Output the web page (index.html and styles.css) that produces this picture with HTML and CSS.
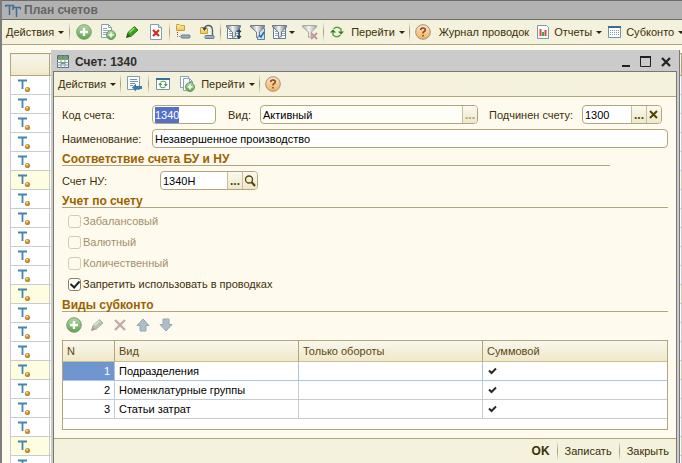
FILE: index.html
```html
<!DOCTYPE html>
<html lang="ru">
<head>
<meta charset="utf-8">
<title>План счетов</title>
<link rel="stylesheet" href="styles.css">
</head>
<body>
<svg class="defs" aria-hidden="true">
  <defs>
    <linearGradient id="green" x1="0" y1="0" x2="0" y2="1"><stop offset="0" stop-color="#b4d8a6"/><stop offset="1" stop-color="#5aa548"/></linearGradient>
    <linearGradient id="orange" x1="0" y1="0" x2="0" y2="1"><stop offset="0" stop-color="#fbe3c8"/><stop offset="1" stop-color="#f4b25c"/></linearGradient>
    <linearGradient id="steel" x1="0" y1="0" x2="1" y2="0"><stop offset="0" stop-color="#7b838c"/><stop offset=".45" stop-color="#f4f6f8"/><stop offset="1" stop-color="#6a727c"/></linearGradient>
    <linearGradient id="folder" x1="0" y1="0" x2="0" y2="1"><stop offset="0" stop-color="#fff0b4"/><stop offset="1" stop-color="#ecc34c"/></linearGradient>
    <symbol id="i-add" viewBox="0 0 16 16"><circle cx="8" cy="8" r="7.3" fill="url(#green)" stroke="#7d9c78"/><path d="M8 4v8M4 8h8" stroke="#fff" stroke-width="2.4"/></symbol>
    <symbol id="i-copy" viewBox="0 0 16 16"><path d="M1.5.5h7l3 3v10h-10z" fill="#fff" stroke="#8aa0b2"/><path d="M8.500.5v3h3M3 4.500h4M3 6.500h6M3 8.500h5M3 10.500h4" fill="none" stroke="#8fa6b8"/><circle cx="11" cy="11" r="4.500" fill="url(#green)" stroke="#679b5c"/><path d="M11 8.500v5M8.500 11h5" stroke="#fff" stroke-width="1.500"/></symbol>
    <symbol id="i-docs" viewBox="0 0 16 16"><path d="M1.500.5h8v11h-8z" fill="#fff" stroke="#8aa0b2"/><path d="M4.500 2.500h6l3 3v9h-9z" fill="#f8fbfd" stroke="#8aa0b2"/><path d="M10.500 2.500v3h3" fill="none" stroke="#8aa0b2"/><circle cx="11" cy="11" r="4.500" fill="url(#green)" stroke="#679b5c"/><path d="M11 8.500v5M8.500 11h5" stroke="#fff" stroke-width="1.500"/></symbol>
    <symbol id="i-pencil" viewBox="0 0 16 16"><path d="M2.500 13.500l1.500-5 6.500-6 3.500 3.500-6.500 6z" fill="#39a51d" stroke="#2c7d1b"/><path d="M5.500 8.500l5-4.500" stroke="#8be56a" stroke-width="1.500"/><path d="M3.500 9.500l3 3-4 1z" fill="#4a4a36"/></symbol>
    <symbol id="i-del" viewBox="0 0 16 16"><path d="M2.500.5h8l3 3v12h-11z" fill="#fff" stroke="#849caf"/><path d="M10.500.5v3h3" fill="#dce6ee" stroke="#849caf"/><path d="M5 6l6 6M11 6l-6 6" stroke="#d32c20" stroke-width="2.200"/></symbol>
    <symbol id="i-level" viewBox="0 0 16 16"><path d="M1.500 1.500v-1h3l1 1h4v5h-8z" fill="url(#folder)" stroke="#c6a041"/><path d="M2.500 8v4.500h2" fill="none" stroke="#4d4d35" stroke-dasharray="1 1"/><rect x="6" y="11" width="9" height="3" rx="1" fill="#9bb0c4" stroke="#60788e"/></symbol>
    <symbol id="i-move" viewBox="0 0 16 16"><path d="M1.500 4.500v-1h3l1 1h3v5h-7z" fill="url(#folder)" stroke="#c6a041"/><path d="M13.500 11V6Q13 1.500 9.500 1.500T5.500 4.500" fill="none" stroke="#4c6274" stroke-width="1.300"/><path d="M3 3.500h5L5.500 7z" fill="#344b5c"/><rect x="6" y="11.500" width="9" height="3" rx="1" fill="#9bb0c4" stroke="#60788e"/></symbol>
    <symbol id="i-funnel" viewBox="0 0 16 16"><path d="M.5 1.500h14v1.500L9.500 8v4.500l-3 1V8L.5 3z" fill="url(#steel)" stroke="#747c85"/></symbol>
    <symbol id="i-list" viewBox="0 0 16 16"><path d="M1.500 3.500h12v11h-12z" fill="#fff" stroke="#5d7f99"/><path d="M3 7.500h3M3 9.500h3M3 11.500h3M10 7.500h3M10 9.500h3M10 11.500h3" stroke="#8fa6b8"/></symbol>
    <symbol id="i-refresh" viewBox="0 0 16 16"><path d="M4.500 5Q8 1.500 12 5v2.500M11.500 11Q8 14.500 4 11V8.500" fill="none" stroke="#5fa348" stroke-width="1.500"/><path d="M9 7.500h6l-3 3zM1 8.500h6l-3-3z" fill="#2f7a20"/></symbol>
    <symbol id="i-help" viewBox="0 0 16 16"><circle cx="8" cy="8" r="7.300" fill="url(#orange)" stroke="#a58e7e"/><path d="M5.700 6Q5.700 4 8 4t2.300 2Q10.300 7.200 8.500 8 8 8.300 8 9.500M8 11v1.500" fill="none" stroke="#874b22" stroke-width="1.600"/></symbol>
    <symbol id="i-t" viewBox="0 0 16 16"><path d="M2 3.500h9M6.500 3.500v8.500" stroke="#4385ad" stroke-width="1.800"/><circle cx="11.500" cy="12.500" r="2.600" fill="#c58a33"/><circle cx="11" cy="11.700" r="1" fill="#fae0a0"/></symbol>
    <symbol id="i-cross" viewBox="0 0 16 16"><path d="M3 3l10 10M13 3L3 13" stroke="#c0abaa" stroke-width="2.400"/></symbol>
    <symbol id="i-up" viewBox="0 0 16 16"><path d="M8 2l6 6.500h-3V14H5V8.500H2z" fill="#aebdc8" stroke="#94a6b4"/></symbol>
    <symbol id="i-check" viewBox="0 0 10 10"><path d="M2 4.500l2.500 2.500 4.500-4.500" fill="none" stroke="#282828" stroke-width="2"/></symbol>
  </defs>
</svg>
<main class="app">
  <header class="titlebar">
    <svg class="icon" viewBox="0 0 16 16"><path d="M.5 5V3.500H8.500V5M4.500 3.500V13M8 8V5.500H15.500V7.500M11.500 5.500V15" fill="none" stroke="#3d708f" stroke-width="1.500"/></svg>
    <h1>План счетов</h1>
  </header>
  <nav class="toolbar">
    <button class="drop">Действия</button><i class="sep wide"></i>
    <button aria-label="Добавить"><svg class="icon"><use href="#i-add"/></svg></button>
    <button aria-label="Скопировать"><svg class="icon"><use href="#i-copy"/></svg></button>
    <button aria-label="Изменить"><svg class="icon"><use href="#i-pencil"/></svg></button>
    <button aria-label="Удалить"><svg class="icon"><use href="#i-del"/></svg></button><i class="sep"></i>
    <button aria-label="Иерархия"><svg class="icon"><use href="#i-level"/></svg></button>
    <button aria-label="Переместить"><svg class="icon"><use href="#i-move"/></svg></button><i class="sep"></i>
    <button aria-label="Отбор"><svg class="icon"><use href="#i-list"/><use href="#i-funnel"/><path d="M13 6v8M11 8l2-2 2 2M11 12l2 2 2-2" fill="none" stroke="#24485e" stroke-width="1.400"/></svg></button>
    <button aria-label="Отбор по значению"><svg class="icon"><path d="M7.500 4.500h7v11h-7z" fill="#cbe3f2" stroke="#4e87ae"/><use href="#i-funnel"/><path d="M9 11l2 2 3-5" fill="none" stroke="#1e6ea2" stroke-width="1.500"/></svg></button>
    <button class="drop icon-drop" aria-label="История отборов"><svg class="icon"><use href="#i-list"/><use href="#i-funnel"/></svg></button>
    <button aria-label="Отключить отбор"><svg class="icon"><use href="#i-funnel" opacity=".6"/><path d="M9 9l6 6M15 9l-6 6" stroke="#bd9998" stroke-width="2"/></svg></button><i class="sep"></i>
    <button aria-label="Обновить"><svg class="icon"><use href="#i-refresh"/></svg></button>
    <button class="drop">Перейти</button><i class="sep"></i>
    <button aria-label="Справка"><svg class="icon"><use href="#i-help"/></svg></button>
    <button>Журнал проводок</button>
    <button class="drop"><svg class="icon"><path d="M2.500 1.500h9l2 2v11h-11z" fill="#fff" stroke="#7d98ad"/><path d="M5.500 12V5M10.500 12V6" stroke="#d24a43" stroke-width="2"/><path d="M8 12V8" stroke="#4e9b4e" stroke-width="2"/></svg>Отчеты</button>
    <button class="drop"><svg class="icon"><path d="M1.500 2.500h12v11h-12z" fill="#fff" stroke="#7292a9"/><path d="M1 3h13" stroke="#386d96" stroke-width="2"/><path d="M3 6.500h10M3 8.500h10M3 10.500h10" stroke="#849bad" stroke-dasharray="1 1"/></svg>Субконто</button>
  </nav>
  <section class="workspace">
    <table class="accounts" aria-label="Счета">
      <thead><tr><th></th><th></th></tr></thead>
      <tbody id="accounts"></tbody>
    </table>
  </section>
  <section class="dialog" role="dialog" aria-labelledby="dlg">
    <header class="dlg-title">
      <svg class="icon" viewBox="0 0 16 16"><path d="M2.500 1.500h11v12h-11z" fill="#fff" stroke="#4e6f7d"/><path d="M3 2h10v3H3zM6 8h4v2H6z" fill="#69a253"/><path d="M2 5.500h12M2 8.500h12M2 11h12M6 1v13M10 1v13" stroke="#7d9aa5"/></svg>
      <h2 id="dlg">Счет: 1340</h2>
      <button aria-label="Свернуть"><svg viewBox="0 0 12 12"><path d="M2 10h8" stroke="#222" stroke-width="2"/></svg></button>
      <button aria-label="Развернуть"><svg viewBox="0 0 12 12"><path d="M.5 1.500h10v9h-10z" fill="none" stroke="#222"/><path d="M0 1h11" stroke="#222" stroke-width="2"/></svg></button>
      <button aria-label="Закрыть окно"><svg viewBox="0 0 12 12"><path d="M2 2l8 8M10 2l-8 8" stroke="#222" stroke-width="2.200"/></svg></button>
    </header>
    <div class="panel">
      <nav class="toolbar">
        <button class="drop">Действия</button><i class="sep"></i>
        <button aria-label="Записать и показать"><svg class="icon"><path d="M1.500.5h12v13h-12z" fill="#fff" stroke="#819bac"/><path d="M4 3.500h7M4 5.500h8M4 7.500h5M4 9.500h3" stroke="#7891a4"/><path d="M6 11.500l4-4V10h6v3h-6v2.500z" fill="#347fae"/></svg></button><i class="sep wide"></i>
        <button aria-label="Обновить"><svg class="icon"><path d="M1.500 2.500h13v11h-13z" fill="#fff" stroke="#7292a9"/><path d="M1 3h14" stroke="#386d96" stroke-width="2"/><use href="#i-refresh" x="2" y="3" width="12" height="11"/></svg></button>
        <button aria-label="Скопировать"><svg class="icon"><use href="#i-docs"/></svg></button>
        <button class="drop">Перейти</button><i class="sep"></i>
        <button aria-label="Справка"><svg class="icon"><use href="#i-help"/></svg></button>
      </nav>
      <form class="form">
        <div class="row">
          <label class="first" for="code">Код счета:</label>
          <span class="field code"><input id="code" value="1340"></span>
          <label class="kind-label" for="kind">Вид:</label>
          <span class="field kind"><input id="kind" value="Активный"><button type="button" disabled aria-label="Выбрать вид">...</button></span>
          <label class="parent-label" for="parent">Подчинен счету:</label>
          <span class="field parent"><input id="parent" value="1300"><button type="button" aria-label="Выбрать счет">...</button><button type="button" aria-label="Очистить"><svg viewBox="0 0 12 12"><path d="M2 2l7 7M9 2L2 9" stroke="#54420a" stroke-width="2"/></svg></button></span>
        </div>
        <div class="row">
          <label class="first" for="name">Наименование:</label>
          <span class="field name"><input id="name" value="Незавершенное производство"></span>
        </div>
        <h3 class="short">Соответствие счета БУ и НУ</h3>
        <div class="row tax">
          <label for="nu">Счет НУ:</label>
          <span class="field nu"><input id="nu" value="1340Н"><button type="button" aria-label="Выбрать">...</button><button type="button" aria-label="Открыть"><svg viewBox="0 0 12 12"><circle cx="5" cy="4.500" r="3.500" fill="none" stroke="#54420a" stroke-width="1.300"/><path d="M7.500 7l3.500 4" stroke="#54420a" stroke-width="2"/></svg></button></span>
        </div>
        <h3>Учет по счету</h3>
        <div class="checks">
          <label><input type="checkbox" disabled>Забалансовый</label>
          <label><input type="checkbox" disabled>Валютный</label>
          <label><input type="checkbox" disabled>Количественный</label>
          <label><input type="checkbox" checked>Запретить использовать в проводках</label>
        </div>
        <h3>Виды субконто</h3>
        <div class="mini-tools">
          <button type="button" aria-label="Добавить"><svg class="icon"><use href="#i-add"/></svg></button>
          <button type="button" disabled aria-label="Изменить"><svg class="icon pale"><use href="#i-pencil"/></svg></button>
          <button type="button" disabled aria-label="Удалить"><svg class="icon"><use href="#i-cross"/></svg></button>
          <button type="button" disabled aria-label="Вверх"><svg class="icon"><use href="#i-up"/></svg></button>
          <button type="button" disabled aria-label="Вниз"><svg class="icon flip"><use href="#i-up"/></svg></button>
        </div>
        <div class="grid">
          <table>
            <colgroup><col class="c-n"><col class="c-kind"><col class="c-turn"><col></colgroup>
            <thead><tr><th>N</th><th>Вид</th><th>Только обороты</th><th>Суммовой</th></tr></thead>
            <tbody>
              <tr class="current"><td>1</td><td>Подразделения</td><td></td><td><svg class="tick" role="img" aria-label="Да"><use href="#i-check"/></svg></td></tr>
              <tr><td>2</td><td>Номенклатурные группы</td><td></td><td><svg class="tick" role="img" aria-label="Да"><use href="#i-check"/></svg></td></tr>
              <tr><td>3</td><td>Статьи затрат</td><td></td><td><svg class="tick" role="img" aria-label="Да"><use href="#i-check"/></svg></td></tr>
            </tbody>
          </table>
        </div>
      </form>
      <footer class="actions">
        <button class="ok">OK</button><i class="sep"></i><button>Записать</button><i class="sep"></i><button>Закрыть</button>
      </footer>
    </div>
  </section>
</main>
<script src="app.js"></script>
</body>
</html>
```
FILE: styles.css
```css
* { box-sizing: border-box; }
body { margin: 0; font: 11px/16px "Liberation Sans", Arial, sans-serif; color: #3c2f0a; overflow: hidden; }
button, input { font: inherit; color: inherit; }
button { display: flex; align-items: center; padding: 0; border: 0; background: none; white-space: nowrap; }
h1, h2, h3 { margin: 0; font-size: 12px; font-weight: bold; }
.defs { position: absolute; width: 0; height: 0; }
.icon { width: 16px; height: 16px; flex: none; }
.app { position: relative; display: flex; flex-direction: column; height: 100vh; overflow: hidden; border-left: 2px solid #7d7d7d; background: #fffaee; }
.titlebar { display: flex; align-items: center; gap: 3px; height: 20px; padding-left: 3px; flex: none; background: #b2b2b2; border-top: 1px solid #6d6a6a; border-bottom: 1px solid #6d6a6a; }
.titlebar h1 { color: #656565; }
.toolbar { display: flex; align-items: center; height: 25px; padding-left: 2px; flex: none; background: #f4f1dc; border-bottom: 1px solid #b0a67c; }
.toolbar button { padding: 0 4px; }
.toolbar .drop { gap: 3px; padding: 0 3px 0 2px; }
.drop::after { content: ""; margin-left: 1px; border: 3px solid transparent; border-top-color: #2f2508; border-bottom: 0; }
.toolbar .icon-drop { gap: 0; }
.sep { width: 1px; height: 20px; margin: 0 1px; flex: none; background: linear-gradient(#f4f1dc, #a59c74, #f4f1dc); }
.toolbar .wide { margin: 0 2px; }
.workspace { flex: 1; padding: 8px 0 0 8px; }
.accounts { width: 100%; border-collapse: collapse; table-layout: fixed; border: 1px solid #b0a67c; background: #fff; }
.accounts th { height: 22px; padding: 0; background: linear-gradient(#f9f7ee, #efe8c8); border: 1px solid #b0a67c; }
.accounts th:first-child { width: 39px; }
.accounts td { height: 19px; padding: 0; border: 1px solid #c9cdd0; }
.accounts td:first-child { padding-left: 5px; }
.accounts .icon { display: block; }
.accounts .hl { background: #fefde0; }
.dialog { position: absolute; left: 49px; right: 2px; top: 50px; bottom: 0; display: flex; flex-direction: column; background: #cbcbcb; border-right: 1px solid #777; padding: 0 2px; }
.dlg-title { display: flex; align-items: center; gap: 8px; height: 21px; padding: 3px 5px 0 2px; flex: none; }
.dlg-title h2 { flex: 1; margin-left: -4px; color: #2d2d2d; }
.dlg-title button svg { width: 12px; height: 12px; }
.panel { flex: 1; display: flex; flex-direction: column; min-height: 0; border: 1px solid #777; border-bottom: 0; background: #fffaee; }
.form { flex: 1; padding: 8px 8px 0; }
.row { display: flex; align-items: center; margin-bottom: 5px; }
.first { width: 90px; }
.field { display: flex; height: 19px; border: 1px solid #b0a67c; border-radius: 4px; overflow: hidden; background: #fff; }
.field input { flex: 1; min-width: 0; width: 0; padding: 0 2px; border: 0; outline: 0; background: none; color: #000; }
.field button { justify-content: center; width: 15px; border-left: 1px solid #c7bf9c; background: linear-gradient(#fbf9ef, #eee8cb); font-size: 12px; font-weight: bold; color: #54420a; }
.field button:disabled { color: #aaa27f; }
.field svg { width: 12px; height: 12px; }
.code { width: 64px; }
#code::selection { background: #5571c7; color: #fff; }
.kind-label { margin-left: 12px; width: 32px; }
.kind { flex: 1; background: #fffdf8; }
.parent-label { margin-left: 11px; width: 93px; }
.parent { width: 80px; margin-right: 6px; }
.name { flex: 1; }
.nu { width: 98px; }
.tax label { width: 98px; }
.tax { margin-top: 5px; }
h3 { line-height: 12px; color: #9b6200; border-bottom: 1px solid #b0a67c; }
h3.short { width: 548px; }
.checks { display: flex; flex-direction: column; gap: 5px; padding: 5px 0 7px 6px; }
.checks label { display: flex; align-items: center; gap: 2px; }
.checks label:has(:disabled) { color: #a39068; }
.checks input { appearance: none; display: grid; place-items: center; width: 13px; height: 13px; margin: 0; border: 1px solid #8f845a; border-radius: 3px; background: #fff; }
.checks input:disabled { border-color: #d5cdb0; background: none; }
.checks input:checked::after { content: ""; width: 4px; height: 7px; margin-bottom: 2px; border: solid #222; border-width: 0 2px 2px 0; transform: rotate(42deg); }
.mini-tools { display: flex; gap: 7px; padding: 5px 0 7px 4px; }
.pale { filter: grayscale(.8); opacity: .5; }
.flip { transform: rotate(180deg); }
.grid { height: 90px; border: 1px solid #b0a67c; background: #fff; }
.grid table { width: 100%; border-collapse: separate; border-spacing: 0; table-layout: fixed; }
.grid th { height: 21px; padding: 0 4px; text-align: left; font-weight: normal; color: #5c4713; background: linear-gradient(#f9f7ee, #efe8c8); border-right: 1px solid #b0a67c; border-bottom: 1px solid #c9c096; }
.grid td { height: 19px; padding: 0 4px; color: #000; border-right: 1px solid #c5cdd2; border-bottom: 1px solid #c5cdd2; }
.grid th:last-child, .grid td:last-child { border-right: 0; }
.grid td:first-child { text-align: right; }
.grid .current td { border-color: #aac4e8; }
.grid .current td:first-child { background: #6f96cf; color: #fff; }
.c-n { width: 52px; } .c-kind { width: 184px; } .c-turn { width: 184px; }
.tick { display: block; width: 10px; height: 10px; }
.actions { display: flex; align-items: center; justify-content: flex-end; gap: 6px; height: 25px; padding-right: 7px; flex: none; background: #f4f1dc; border-top: 1px solid #b0a67c; }
.ok { font-size: 12px; font-weight: bold; }
```
FILE: app.js
```js
const highlighted = [5, 11, 15, 19];
const body = document.getElementById("accounts");
for (let i = 0; i < 22; i++) {
  const row = body.insertRow();
  if (highlighted.includes(i)) row.className = "hl";
  row.insertCell().innerHTML = '<svg class="icon"><use href="#i-t"/></svg>';
  row.insertCell();
}
const code = document.getElementById("code");
code.focus();
code.select();
```
